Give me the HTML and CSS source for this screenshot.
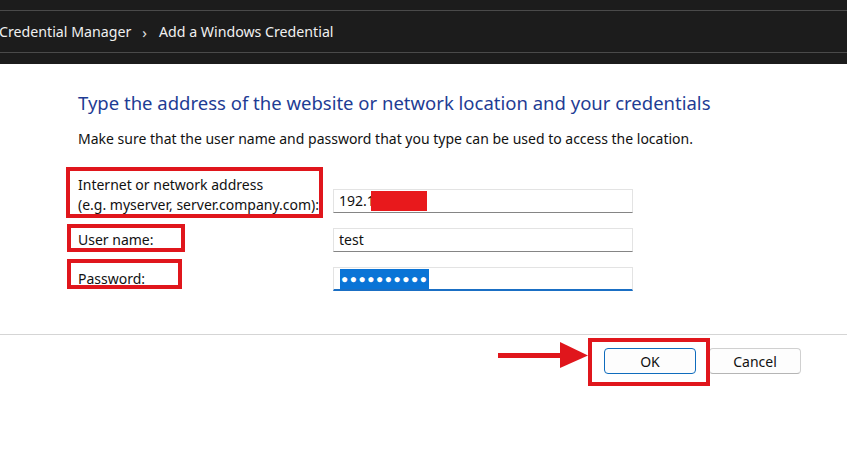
FILE: index.html
```html
<!DOCTYPE html>
<html lang="en">
<head>
<meta charset="utf-8">
<title>Add a Windows Credential</title>
<link rel="stylesheet" href="styles.css">
</head>
<body>
<div class="page">
  <header class="topbar">
    <nav class="crumbs">
      <span class="crumb">Credential Manager</span>
      <span class="sep">›</span>
      <span class="crumb">Add a Windows Credential</span>
    </nav>
  </header>

  <main class="content">
    <h1 class="title">Type the address of the website or network location and your credentials</h1>
    <p class="desc">Make sure that the user name and password that you type can be used to access the location.</p>

    <div class="form">
      <div class="row row-addr">
        <label class="label">Internet or network address<br>(e.g. myserver, server.company.com):</label>
        <div class="field"><span class="value">192.1</span><span class="redact"></span></div>
      </div>
      <div class="row">
        <label class="label">User name:</label>
        <div class="field"><span class="value">test</span></div>
      </div>
      <div class="row">
        <label class="label">Password:</label>
        <div class="field field-focus"><span class="selected">●●●●●●●●●●</span></div>
      </div>
    </div>
  </main>

  <footer class="footer">
    <button class="btn btn-default">OK</button>
    <button class="btn">Cancel</button>
  </footer>

  <div class="mark mark-addr"></div>
  <div class="mark mark-user"></div>
  <div class="mark mark-pass"></div>
  <div class="mark mark-ok"></div>
  <svg class="arrow" width="92" height="28" viewBox="0 0 92 28">
    <rect x="0" y="11" width="66" height="5" fill="#e0161c"/>
    <polygon points="62,0 90,13.5 62,26" fill="#e0161c"/>
  </svg>
</div>
</body>
</html>
```

FILE: styles.css
```css
html, body {
  margin: 0;
  padding: 0;
  background: #ffffff;
}
body {
  font-family: "Noto Sans", "Open Sans", sans-serif;
  color: #1a1a1a;
}
.page {
  position: relative;
  width: 847px;
  height: 467px;
  overflow: hidden;
}
.topbar {
  background: #1c1c1c;
  padding: 10px 0 11px;
}
.crumbs {
  height: 41px;
  border-top: 1px solid #4a4a4a;
  border-bottom: 1px solid #4a4a4a;
  display: flex;
  align-items: center;
  color: #f0f0f0;
  font-size: 14.2px;
  margin-left: -1px;
}
.sep {
  font-size: 15px;
  margin: 0 12px 0 11px;
  color: #e0e0e0;
}
.content {
  padding: 26px 0 0 78px;
}
.title {
  margin: 0;
  font-weight: normal;
  font-size: 18.5px;
  line-height: 26px;
  color: #1e3c94;
}
.desc {
  margin: 14px 0 0;
  font-size: 14px;
  line-height: 18px;
  color: #111;
}
.form {
  margin-top: 27px;
  display: flex;
  flex-direction: column;
  gap: 15px;
}
.row {
  display: flex;
  align-items: center;
}
.row-addr {
  align-items: flex-end;
}
.row-addr .label {
  margin-bottom: -2px;
}
.label {
  width: 255px;
  font-size: 14px;
  line-height: 20px;
  color: #111;
}
.field {
  width: 293px;
  height: 22px;
  border: 1px solid #e3e3e3;
  border-bottom-color: #858585;
  background: #fff;
  display: flex;
  align-items: center;
  padding-left: 5px;
  box-sizing: content-box;
  font-size: 14px;
  color: #111;
}
.field .value {
  line-height: 22px;
}
.redact {
  display: inline-block;
  width: 56px;
  height: 20px;
  background: #e8191c;
  margin-left: -4px;
}
.field-focus {
  border-bottom: 2px solid #1a6fc4;
  height: 21px;
}
.selected {
  background: #0a74d6;
  color: #fff;
  font-size: 12px;
  letter-spacing: 1.5px;
  height: 20px;
  line-height: 20px;
  padding: 0 1px;
  margin-left: 1px;
}
.footer {
  margin-top: 43px;
  border-top: 1px solid #d5d5d5;
  display: flex;
  justify-content: flex-end;
  gap: 13px;
  padding: 13px 46px 0 0;
}
.btn {
  width: 92px;
  height: 26px;
  border: 1px solid #d0d0d0;
  border-bottom-color: #b5b5b5;
  border-radius: 4px;
  background: #fdfdfd;
  font-family: "Noto Sans", "Open Sans", sans-serif;
  font-size: 14px;
  color: #111;
  padding: 0;
}
.btn-default {
  border: 1px solid #0f6cbd;
}
.mark {
  position: absolute;
  border: 4px solid #e0161c;
  box-sizing: border-box;
}
.mark-addr { left: 66px; top: 167px; width: 257px; height: 51px; }
.mark-user { left: 67px; top: 224px; width: 118px; height: 28px; }
.mark-pass { left: 67px; top: 259px; width: 115px; height: 30px; }
.mark-ok { left: 588px; top: 338px; width: 122px; height: 48px; }
.arrow {
  position: absolute;
  left: 498px;
  top: 342px;
}
```
